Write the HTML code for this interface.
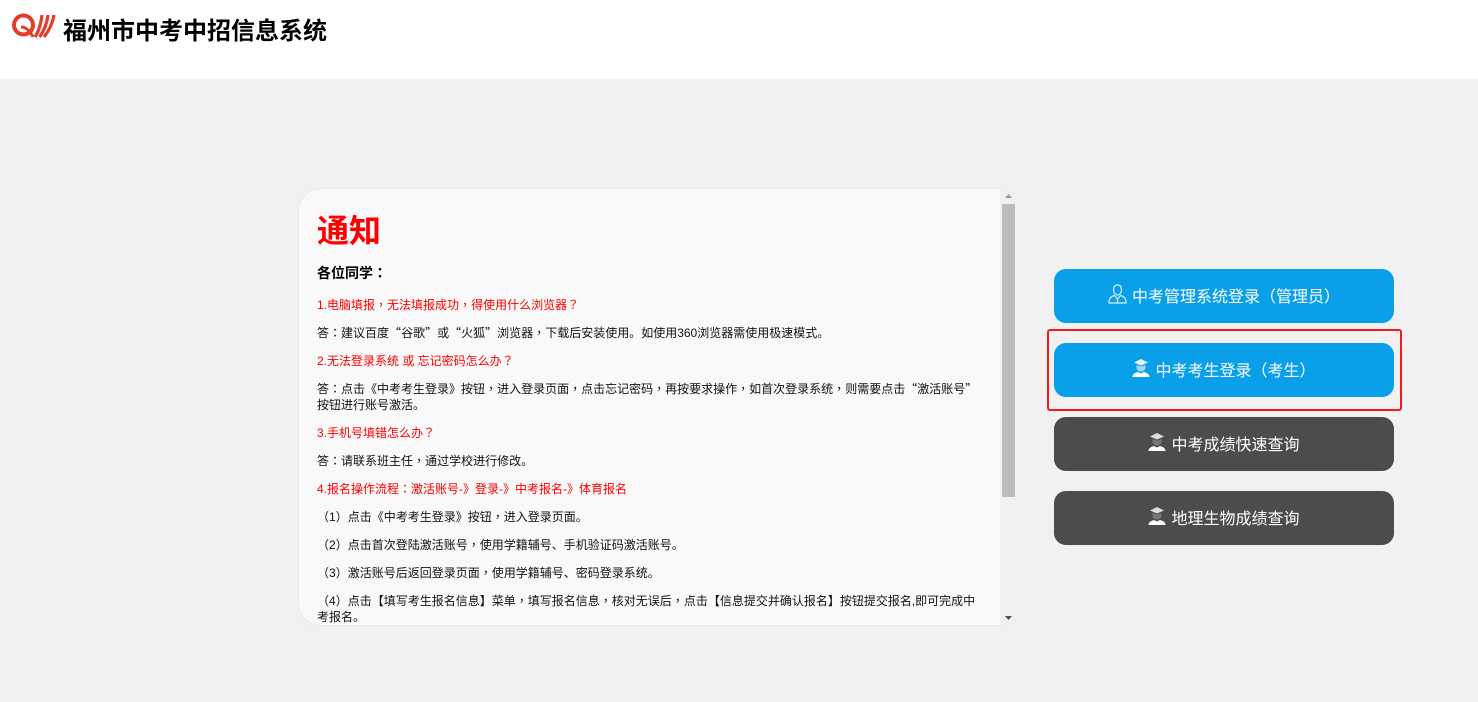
<!DOCTYPE html>
<html lang="zh-CN">
<head>
<meta charset="utf-8">
<title>福州市中考中招信息系统</title>
<style>
html,body{margin:0;padding:0;width:1478px;height:702px;overflow:hidden;background:#f1f1f1;font-family:"Liberation Sans","Noto Sans CJK SC",sans-serif;}
#hd{position:absolute;left:0;top:0;width:1478px;height:79px;background:#fff;}
#title{position:absolute;left:63px;top:14px;font-size:24px;line-height:36px;font-weight:700;color:#000;white-space:nowrap;letter-spacing:0;}
#logo{position:absolute;left:11px;top:13px;}
#panel{position:absolute;left:299px;top:189px;width:701px;height:436px;background:#f9f9f9;border-radius:22px 0 0 22px;box-shadow:0 0 2px #e2e2e2;overflow:hidden;}
#sb{position:absolute;left:1000px;top:189px;width:17px;height:436px;background:#f1f1f1;}
#sb .th{position:absolute;left:2px;top:15px;width:13px;height:293px;background:#bcbcbc;}
#sb svg{position:absolute;left:4px;}
.l{position:absolute;left:18px;width:665px;font-size:12px;line-height:16px;color:#111;margin:0;}
.r{color:#f00;}
.t{font-family:"Noto Sans CJK TC",sans-serif;line-height:0;}
.s{font-family:"Noto Sans CJK SC",sans-serif;line-height:0;}
.btn{position:absolute;left:1054px;width:340px;height:54px;border-radius:12px;color:#fff;font-size:16px;line-height:58px;text-align:center;white-space:nowrap;}
.btn svg{vertical-align:-4px;margin-right:5px;position:relative;top:-2px;}
.b{background:#0aa0e9;}
.d{background:#4c4c4c;}
#box{position:absolute;left:1047px;top:329px;width:351px;height:78px;border:2px solid #f5191c;border-radius:3px;background:transparent;}
</style>
</head>
<body>
<div id="hd">
  <svg id="logo" width="45" height="26" viewBox="0 0 45 26">
    <circle cx="12.500" cy="12" r="9.500" fill="none" stroke="#e33d2c" stroke-width="4"/>
    <path d="M10 14C15 14 19 18 22 24" fill="none" stroke="#e33d2c" stroke-width="3"/>
    <path d="M31 2C30 10 28 18 24 24M37 2C36 10 33 18 28.500 24M43 2C41.500 10 38 18 33 24" fill="none" stroke="#e33d2c" stroke-width="3.200"/>
  </svg>
  <div id="title">福州市中考中招信息系统</div>
</div>

<div id="panel">
  <div style="position:absolute;left:18px;top:22px;font-size:32px;line-height:40px;font-weight:700;color:#f00;">通知</div>
  <div style="position:absolute;left:18px;top:74px;font-size:14px;line-height:20px;font-weight:700;color:#000;white-space:nowrap;">各位同学<span class="t" lang="zh-TW">：</span></div>
  <p class="l r" style="top:108px;">1.电脑填报<span class="t" lang="zh-TW">，</span>无法填报成功<span class="t" lang="zh-TW">，</span>得使用什么浏览器<span class="t" lang="zh-TW">？</span></p>
  <p class="l" style="top:136px;">答<span class="t" lang="zh-TW">：</span>建议百度<span class="s">“</span>谷歌<span class="s">”</span>或<span class="s">“</span>火狐<span class="s">”</span>浏览器<span class="t" lang="zh-TW">，</span>下载后安装使用。如使用360浏览器需使用极速模式。</p>
  <p class="l r" style="top:164px;">2.无法登录系统 或 忘记密码怎么办<span class="t" lang="zh-TW">？</span></p>
  <p class="l" style="top:192px;">答<span class="t" lang="zh-TW">：</span>点击《中考考生登录》按钮<span class="t" lang="zh-TW">，</span>进入登录页面<span class="t" lang="zh-TW">，</span>点击忘记密码<span class="t" lang="zh-TW">，</span>再按要求操作<span class="t" lang="zh-TW">，</span>如首次登录系统<span class="t" lang="zh-TW">，</span>则需要点击<span class="s">“</span>激活账号<span class="s">”</span><br>按钮进行账号激活。</p>
  <p class="l r" style="top:236px;">3.手机号填错怎么办<span class="t" lang="zh-TW">？</span></p>
  <p class="l" style="top:264px;">答<span class="t" lang="zh-TW">：</span>请联系班主任<span class="t" lang="zh-TW">，</span>通过学校进行修改。</p>
  <p class="l r" style="top:292px;">4.报名操作流程<span class="t" lang="zh-TW">：</span>激活账号-》登录-》中考报名-》体育报名</p>
  <p class="l" style="top:320px;"><span class="t" lang="zh-TW">（</span>1<span class="t" lang="zh-TW">）</span>点击《中考考生登录》按钮<span class="t" lang="zh-TW">，</span>进入登录页面。</p>
  <p class="l" style="top:348px;"><span class="t" lang="zh-TW">（</span>2<span class="t" lang="zh-TW">）</span>点击首次登陆激活账号<span class="t" lang="zh-TW">，</span>使用学籍辅号、手机验证码激活账号。</p>
  <p class="l" style="top:376px;"><span class="t" lang="zh-TW">（</span>3<span class="t" lang="zh-TW">）</span>激活账号后返回登录页面<span class="t" lang="zh-TW">，</span>使用学籍辅号、密码登录系统。</p>
  <p class="l" style="top:404px;"><span class="t" lang="zh-TW">（</span>4<span class="t" lang="zh-TW">）</span>点击【填写考生报名信息】菜单<span class="t" lang="zh-TW">，</span>填写报名信息<span class="t" lang="zh-TW">，</span>核对无误后<span class="t" lang="zh-TW">，</span>点击【信息提交并确认报名】按钮提交报名,即可完成中<br>考报名。</p>
</div>

<div id="sb">
  <svg style="top:5px;" width="9" height="5" viewBox="0 0 9 5"><path d="M4.500 0L8 4H1Z" fill="#9a9a9a"/></svg>
  <div class="th"></div>
  <svg style="top:427px;" width="9" height="5" viewBox="0 0 9 5"><path d="M1 0H8L4.500 4Z" fill="#505050"/></svg>
</div>

<div class="btn b" style="top:269px;">
  <svg width="19" height="20" viewBox="0 0 19 20" fill="none" stroke="#fff" stroke-opacity=".85" stroke-width="1.200"><path d="M9.500 1C6.500 1 5.500 3 5.500 6C5.500 9 7.500 11 9.500 11C11.500 11 13.500 9 13.500 6C13.500 3 12.500 1 9.500 1Z"/><path d="M6.500 11.500C3 12.500 1 14 1 19H18C18 14 16 12.500 12.500 11.500L9.500 15Z"/><path d="M9.500 15V19"/></svg>中考管理系统登录<span class="t" lang="zh-TW">（</span>管理员<span class="t" lang="zh-TW">）</span>
</div>
<div class="btn b" style="top:343px;">
  <svg width="18" height="20" viewBox="0 0 18 20"><path d="M9 1L16 4.500L9 7.500L2 4.500Z" fill="#fff" fill-opacity=".9"/><path d="M4.500 7V9.500C4.500 12 6.500 13.500 9 13.500C11.500 13.500 13.500 12 13.500 9.500V7L9 8.500Z" fill="#fff" fill-opacity=".6"/><path d="M0.500 19C0.500 16 3 15 6 14L9 15.500L12 14C15 15 17.500 16 17.500 19Z" fill="#fff"/></svg>中考考生登录<span class="t" lang="zh-TW">（</span>考生<span class="t" lang="zh-TW">）</span>
</div>
<div class="btn d" style="top:417px;">
  <svg width="18" height="20" viewBox="0 0 18 20"><path d="M9 1L16 4.500L9 7.500L2 4.500Z" fill="#ddd"/><path d="M4.500 7V9.500C4.500 12 6.500 13.500 9 13.500C11.500 13.500 13.500 12 13.500 9.500V7L9 8.500Z" fill="#777"/><path d="M0.500 19C0.500 16 3 15 6 14L9 15.500L12 14C15 15 17.500 16 17.500 19Z" fill="#fff"/></svg>中考成绩快速查询
</div>
<div class="btn d" style="top:491px;">
  <svg width="18" height="20" viewBox="0 0 18 20"><path d="M9 1L16 4.500L9 7.500L2 4.500Z" fill="#ddd"/><path d="M4.500 7V9.500C4.500 12 6.500 13.500 9 13.500C11.500 13.500 13.500 12 13.500 9.500V7L9 8.500Z" fill="#777"/><path d="M0.500 19C0.500 16 3 15 6 14L9 15.500L12 14C15 15 17.500 16 17.500 19Z" fill="#fff"/></svg>地理生物成绩查询
</div>
<div id="box"></div>
</body>
</html>
